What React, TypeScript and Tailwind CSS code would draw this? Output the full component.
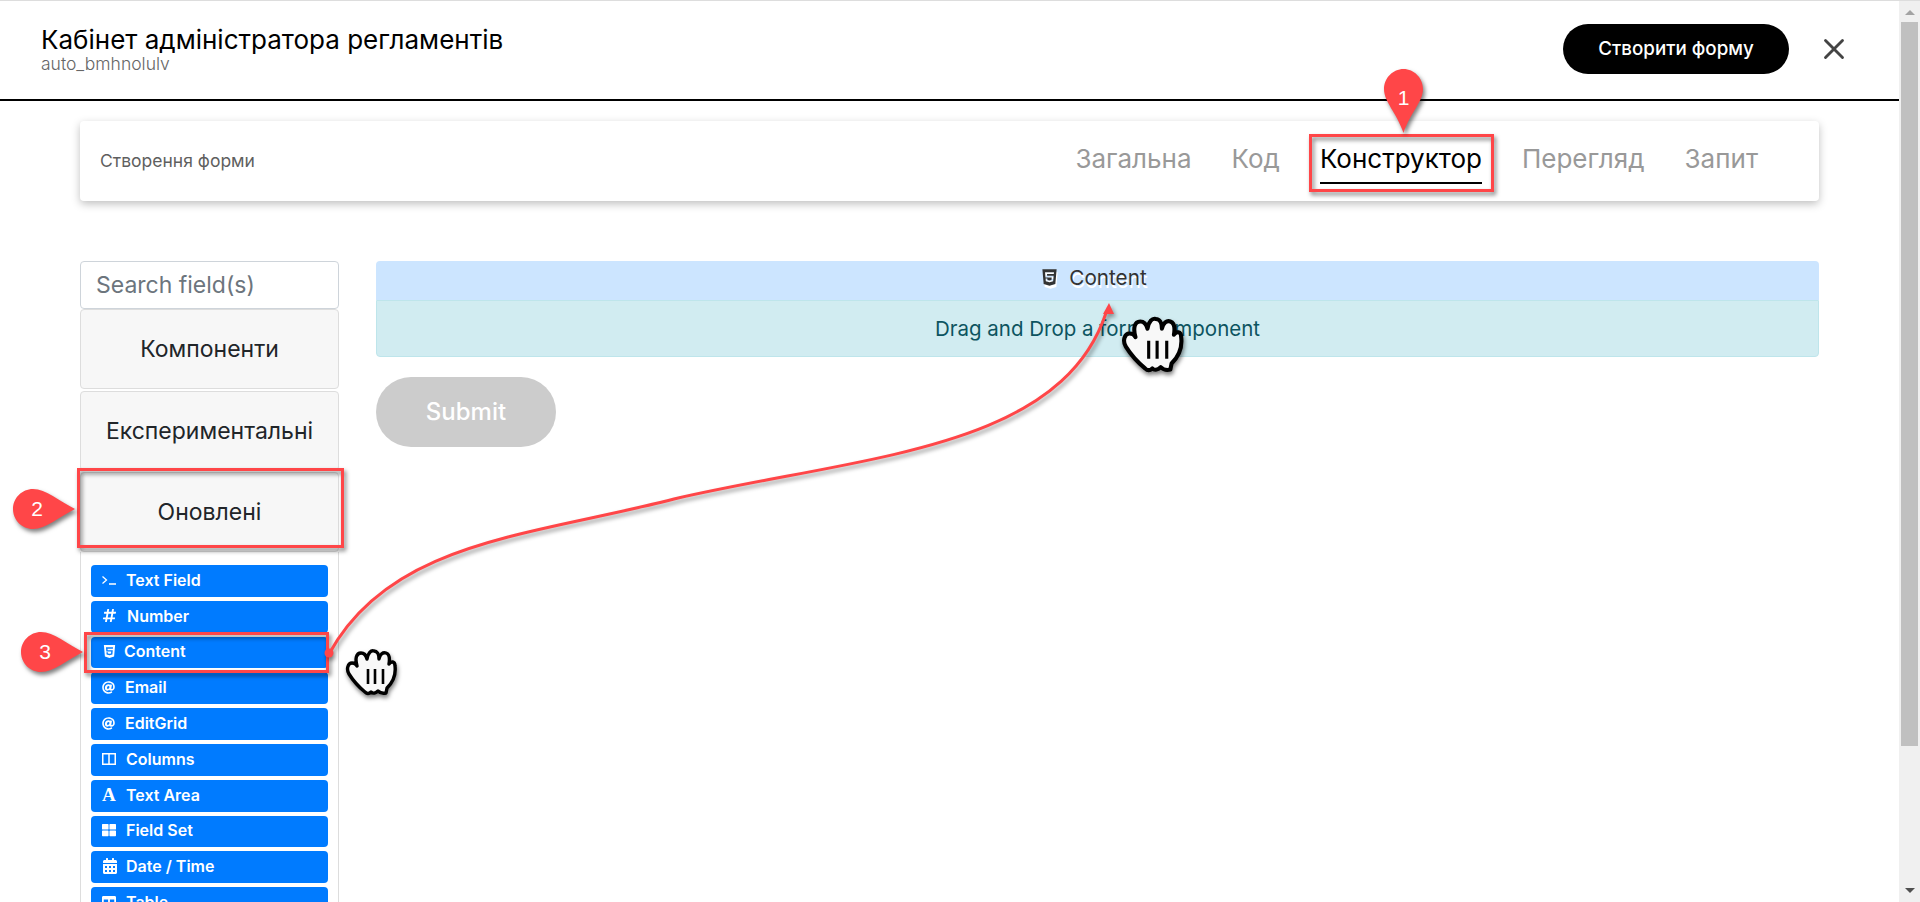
import React from 'react';
import { FaHashtag, FaHtml5, FaAt, FaThLarge, FaCalendarAlt, FaTable } from 'react-icons/fa';
import { X } from 'lucide-react';

const tabs = ['Загальна', 'Код', 'Конструктор', 'Перегляд', 'Запит'];

const fields: { label: string; slot: string; icon: React.ReactNode }[] = [
  {
    label: 'Text Field',
    slot: 'w-[24px]',
    icon: (
      <svg viewBox="0 0 14 10" className="w-[14px] h-[10px]">
        <path d="M0.5 1.5L4.5 5L0.5 8.5M7 9H14" fill="none" stroke="#fff" strokeWidth="1.3" />
      </svg>
    ),
  },
  { label: 'Number', slot: 'w-[25px]', icon: <FaHashtag className="w-[15px] h-[15px]" /> },
  { label: 'Content', slot: 'w-[22px]', icon: <FaHtml5 className="w-[15px] h-[15px]" /> },
  { label: 'Email', slot: 'w-[23px]', icon: <FaAt className="w-[13px] h-[13px]" /> },
  { label: 'EditGrid', slot: 'w-[23px]', icon: <FaAt className="w-[13px] h-[13px]" /> },
  {
    label: 'Columns',
    slot: 'w-[24px]',
    icon: (
      <svg viewBox="0 0 14 12" className="w-[14px] h-[12px]">
        <path d="M0.75 0.75H13.25V11.25H0.75ZM7 0.75V11.25" fill="none" stroke="#fff" strokeWidth="1.5" />
      </svg>
    ),
  },
  {
    label: 'Text Area',
    slot: 'w-[24px]',
    icon: <span className="text-[19px] leading-none font-bold font-['Liberation_Serif',serif]">A</span>,
  },
  { label: 'Field Set', slot: 'w-[24px]', icon: <FaThLarge className="w-[14px] h-[14px]" /> },
  { label: 'Date / Time', slot: 'w-[24px]', icon: <FaCalendarAlt className="w-[16px] h-[16px]" /> },
  { label: 'Table', slot: 'w-[24px]', icon: <FaTable className="w-[14px] h-[14px]" /> },
];

// grabbing hand used by the tutorial annotations
const Hand: React.FC<{ className: string }> = ({ className }) => (
  <svg viewBox="0 0 64 64" className={className}>
    <path
      d="M25 51C20 47 14 41 9 33C6 28 8 22 12 22C14 22 16 23 17 25C15 18 16 12 21 12C24 12 26 14 27 18C28 12 31 9 34 10C37 10 39 13 39 18C40 13 43 11 46 12C49 13 50 17 49 23C51 20 55 20 55 25C56 33 53 41 47 47L46 52C42 53 40 52 38 50C36 52 33 53 31 51C29 53 27 53 25 51Z"
      fill="#f8f8f8"
      stroke="#000"
      strokeWidth="3.4"
      strokeLinejoin="round"
    />
    <path d="M28 28V43M35 28V43M43 28V43" stroke="#000" strokeWidth="2.6" fill="none" />
  </svg>
);

const PinRight: React.FC<{ n: number; className: string }> = ({ n, className }) => (
  <div className={`absolute w-[62px] h-[40px] ${className}`}>
    <svg viewBox="0 0 62 40" className="absolute inset-0 w-full h-full drop-shadow-[2px_3px_2px_rgba(0,0,0,0.5)]">
      <path d="M20 0C33 0 46 12 62 20C46 28 33 40 20 40C9 40 0 31 0 20C0 9 9 0 20 0Z" fill="#ff4648" />
    </svg>
    <span className="absolute left-[12px] top-0 w-[24px] h-[40px] flex items-center justify-center text-white text-[21px] font-['Liberation_Sans',sans-serif]">
      {n}
    </span>
  </div>
);

const App: React.FC = () => {
  return (
    <div className="relative flex h-[902px] overflow-hidden border-t border-[#ddd] bg-white text-[#212529] font-[Inter,sans-serif]">
      <div className="flex-1 min-w-0">
        {/* Header */}
        <header className="flex items-center justify-between h-[100px] border-b-2 border-black pl-[41px] pr-[48px]">
          <div className="-mt-[2px]">
            <h1 className="text-[26px] leading-[30px] text-black">Кабінет адміністратора регламентів</h1>
            <p className="text-[17.5px] leading-[18px] font-light text-[#666]">auto_bmhnolulv</p>
          </div>
          <div className="flex items-center gap-[28px] -mt-[2px]">
            <button className="w-[226px] h-[50px] rounded-full bg-black text-white text-[18.8px] font-medium">
              Створити форму
            </button>
            <X className="w-[34px] h-[34px] text-[#444]" strokeWidth={2} />
          </div>
        </header>

        <div className="px-[80px]">
          {/* Tabs card */}
          <div className="flex items-center justify-between h-[80px] mt-[20px] pl-[20px] pr-[61px] bg-white rounded-[4px] shadow-[0_3px_8px_rgba(0,0,0,0.25)]">
            <span className="text-[17.5px] text-[#5f5f5f]">Створення форми</span>
            <nav className="flex items-center gap-[40px]">
              {tabs.map((t) => (
                <span
                  key={t}
                  className={
                    t === 'Конструктор'
                      ? 'h-[46px] pb-[4px] flex items-center border-b-2 border-black text-black text-[26px]'
                      : 'h-[46px] pb-[4px] flex items-center border-b-2 border-transparent text-[#999] text-[26px]'
                  }
                >
                  {t}
                </span>
              ))}
            </nav>
          </div>

          <div className="flex gap-[37px] mt-[60px]">
            {/* Sidebar */}
            <aside className="w-[259px] shrink-0">
              <div className="h-[48px] flex items-center px-[15px] border border-[#ced4da] rounded-[4px] text-[23px] text-[#6c757d]">
                Search field(s)
              </div>
              <div className="h-[80px] flex items-center justify-center bg-[#f7f7f7] border border-[#ddd] rounded-[4px] text-[23px]">
                Компоненти
              </div>
              <div className="h-[80px] mt-[2px] flex items-center justify-center bg-[#f7f7f7] border border-[#ddd] rounded-[4px] text-[23px]">
                Експериментальні
              </div>
              <div className="h-[80px] mt-[1px] flex items-center justify-center bg-[#f7f7f7] border border-[#ddd] rounded-[4px] text-[23px]">
                Оновлені
              </div>
              <div className="flex flex-col gap-[4px] px-[10px] pt-[13px] border-x border-[#ddd] h-[400px]">
                {fields.map((f) => (
                  <div
                    key={f.label}
                    className="h-[31.8px] shrink-0 flex items-center px-[11px] pb-[2px] bg-[#007bff] rounded-[4px] text-white text-[16px] font-semibold"
                  >
                    <span className={`${f.slot} shrink-0 flex items-center`}>{f.icon}</span>
                    {f.label}
                  </div>
                ))}
              </div>
            </aside>

            {/* Builder area */}
            <main className="flex-1 min-w-0">
              <div className="h-[39px] pb-[6px] pr-[8px] flex items-center justify-center gap-[10px] bg-[#cce5ff] rounded-t-[4px] text-[20.7px] text-[#333] [text-shadow:1px_3px_0_#fff]">
                <FaHtml5 className="w-[19px] h-[19px] text-[#333] drop-shadow-[1px_3px_0_#fff]" />
                Content
              </div>
              <div className="h-[57px] pt-[1px] flex items-center justify-center bg-[#d1ecf1] border border-[#bee5eb] rounded-b-[4px] text-[20.5px] text-[#0c5460]">
                Drag and Drop a form component
              </div>
              <button className="mt-[20px] w-[180px] h-[70px] rounded-full bg-[#ccc] text-white text-[24px] font-medium">
                Submit
              </button>
            </main>
          </div>
        </div>
      </div>

      {/* Scrollbar */}
      <div className="w-[21px] shrink-0 bg-[#f0f0f0] flex flex-col items-center pt-[9px]">
        <svg viewBox="0 0 10 5" className="w-[10px] h-[5px]">
          <path d="M5 0L10 5H0Z" fill="#a3a3a3" />
        </svg>
        <div className="w-[17px] h-[724px] mt-[7px] bg-[#c0c0c0]" />
        <svg viewBox="0 0 10 5" className="w-[10px] h-[5px] mt-[142px]">
          <path d="M0 0H10L5 5Z" fill="#505050" />
        </svg>
      </div>

      {/* Tutorial annotations */}
      <div className="absolute left-[1309px] top-[133px] w-[185px] h-[58px] border-[3px] border-[#ff4648] drop-shadow-[2px_3px_2px_rgba(0,0,0,0.5)]" />
      <div className="absolute left-[77px] top-[467px] w-[267px] h-[80px] border-[3px] border-[#ff4648] drop-shadow-[2px_3px_2px_rgba(0,0,0,0.5)]" />
      <div className="absolute left-[84px] top-[631px] w-[245px] h-[41px] border-[3px] border-[#ff4648] drop-shadow-[2px_3px_2px_rgba(0,0,0,0.5)]" />

      <svg viewBox="0 0 1920 902" className="absolute left-0 top-0 w-[1920px] h-[902px] pointer-events-none drop-shadow-[2px_3px_2px_rgba(0,0,0,0.4)]">
        <path
          d="M329 653C390 540 530 535 674 498C860 455 1060 450 1106 312"
          fill="none"
          stroke="#ff4648"
          strokeWidth="3"
        />
        <circle cx="329" cy="652" r="4.5" fill="#ff4648" />
        <path d="M1109 302L1114 313H1103Z" fill="#ff4648" />
      </svg>

      <div className="absolute left-[1384px] top-[68px] w-[39px] h-[64px]">
        <svg viewBox="0 0 39 64" className="absolute inset-0 w-full h-full drop-shadow-[2px_3px_2px_rgba(0,0,0,0.5)]">
          <path d="M19.5 0C30 0 39 9 39 20C39 33 26 44 19.5 64C13 44 0 33 0 20C0 9 9 0 19.5 0Z" fill="#ff4648" />
        </svg>
        <span className="absolute inset-x-0 top-[13px] text-center text-white text-[21px] font-['Liberation_Sans',sans-serif]">
          1
        </span>
      </div>
      <PinRight n={2} className="left-[13px] top-[488px]" />
      <PinRight n={3} className="left-[21px] top-[631px]" />

      <Hand className="absolute left-[340px] top-[640px] w-[64px] h-[64px] drop-shadow-[1px_3px_2px_rgba(0,0,0,0.5)]" />
      <Hand className="absolute left-[1115px] top-[306px] w-[77px] h-[77px] drop-shadow-[1px_3px_2px_rgba(0,0,0,0.5)]" />
    </div>
  );
};

export default App;
